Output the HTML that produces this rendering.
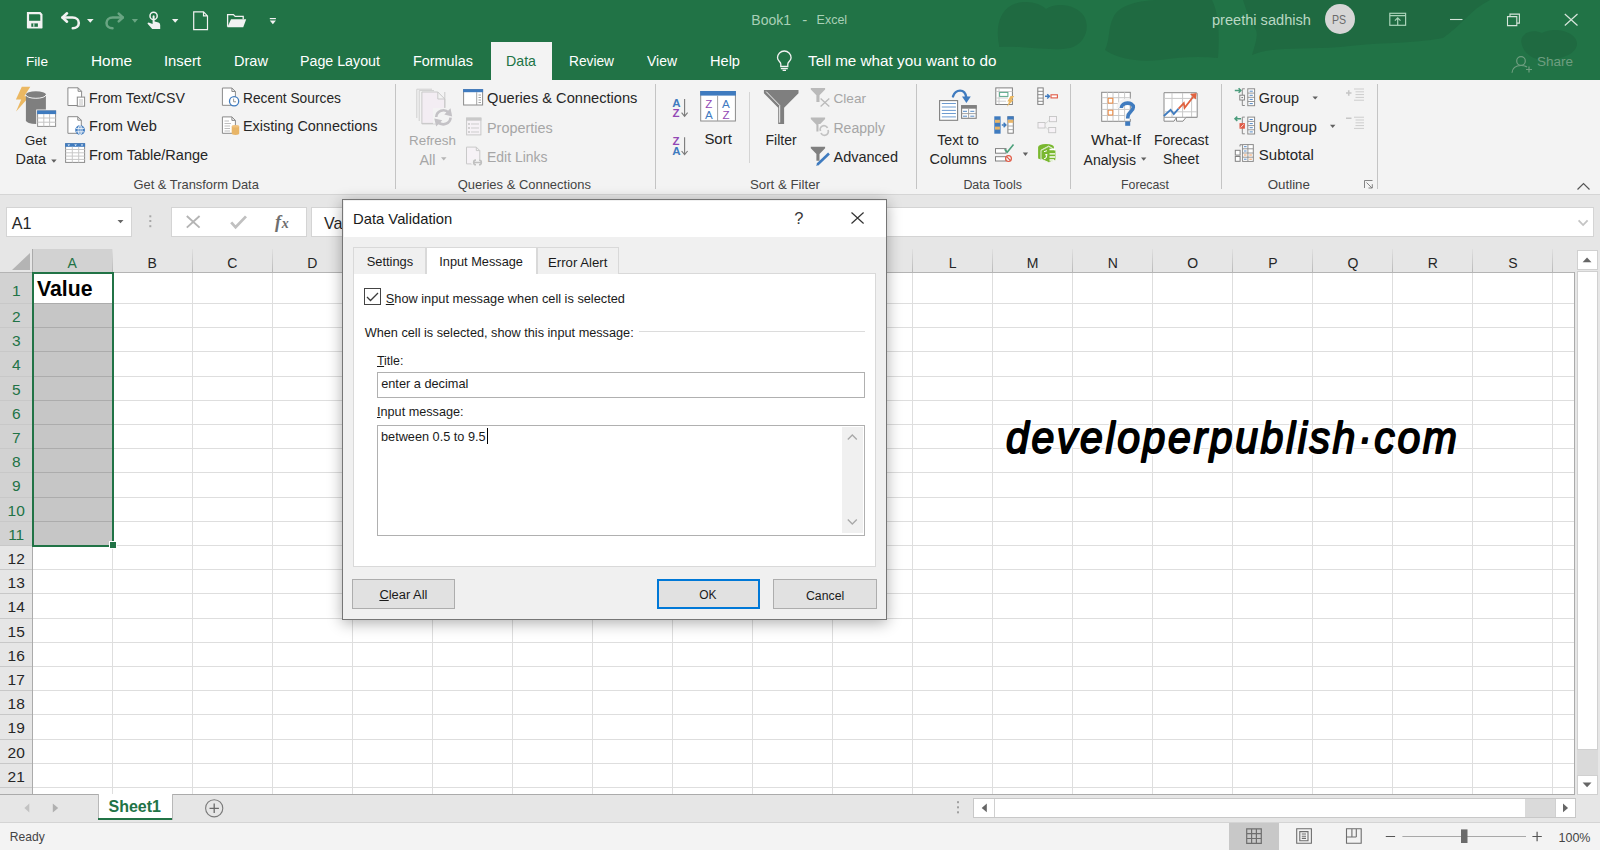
<!DOCTYPE html><html><head><meta charset="utf-8"><style>
html,body{margin:0;padding:0;width:1600px;height:850px;overflow:hidden;background:#ffffff;}
body{position:relative;font-family:"Liberation Sans",sans-serif;}
.t{position:absolute;white-space:nowrap;line-height:1;}
.r{position:absolute;box-sizing:border-box;}
svg.r{overflow:visible;}
</style></head><body>
<div class="r" style="left:0.00px;top:0.00px;width:1600.00px;height:80.00px;background:#217346"></div>
<svg class="r" style="left:0.00px;top:0.00px" width="1600" height="80" viewBox="0 0 1600 80">
<g fill="#1f6a41">
<path d="M999 45 C996 30 998 12 1012 5 C1025 -1 1040 3 1046 9 C1056 2 1078 4 1085 18 C1090 30 1084 44 1070 48 C1050 52 1020 45 999 47 Z"/>
<path d="M1105 50 C1110 40 1108 28 1113 18 C1118 5 1140 0 1160 0 L1212 0 C1218 12 1220 30 1218 58 C1200 56 1180 57 1160 60 C1140 62 1120 60 1105 50 Z"/>
<path d="M1243 0 L1490 0 C1470 10 1462 25 1443 38 C1410 44 1380 42 1340 47 C1300 50 1275 46 1252 55 C1256 42 1258 35 1256 30 C1250 20 1246 10 1243 0 Z"/>
<path d="M1522 45 C1518 35 1530 28 1542 33 C1555 26 1578 32 1577 45 C1575 55 1560 60 1540 60 C1530 58 1524 52 1522 45 Z"/>
</g></svg>
<svg class="r" style="left:0.00px;top:0.00px" width="300" height="40" viewBox="0 0 300 40">
<g fill="none" stroke="#f2f2f2" stroke-width="2.2">
<path d="M28 13.2 H40 L41.4 14.6 V27.2 H28 Z"/>
</g>
<rect x="27.5" y="20.8" width="14.5" height="7.5" fill="#f2f2f2"/>
<rect x="31.3" y="23.4" width="6.6" height="3.4" fill="#217346"/>
<rect x="33.3" y="23.4" width="1.1" height="3.4" fill="#f2f2f2"/>
<g fill="none" stroke="#f2f2f2" stroke-width="2.6" stroke-linecap="round" stroke-linejoin="round">
<path d="M62.5 17.5 H72.5 C76.5 17.5 78.8 20 78.8 23 C78.8 26.2 76.2 28.2 72.8 28.2"/>
<path d="M67 13.3 L62.5 17.5 L67 21.7"/>
</g>
<path d="M87 19 H93.6 L90.3 22.8Z" fill="#f2f2f2"/>
<g fill="none" stroke="#6aa583" stroke-width="2.5" stroke-linecap="round" stroke-linejoin="round">
<path d="M122.8 17.5 H112.8 C108.8 17.5 106.5 20 106.5 23 C106.5 26.2 109.1 28.2 112.5 28.2"/>
<path d="M118.7 13.6 L122.8 17.5 L118.7 21.4"/>
</g>
<path d="M131.8 19 H138 L134.9 22.8Z" fill="#6aa583"/>
<circle cx="153.6" cy="15.9" r="3.6" fill="none" stroke="#f2f2f2" stroke-width="1.5"/>
<path d="M152.6 16 Q153.6 14.6 154.6 16 V21.5 L158.5 22.5 Q160.3 23.2 160.2 25 V29 H152.2 L147.6 23.8 Q147.2 22.6 148.6 22.4 L152.6 24 Z" fill="#f2f2f2"/>
<path d="M172 19 H178.4 L175.2 22.8Z" fill="#f2f2f2"/>
<path d="M193.7 11.9 H203.5 L207.5 15.9 V29.6 H193.7 Z M203.5 11.9 V15.9 H207.5" fill="none" stroke="#f2f2f2" stroke-width="1.2"/>
<path d="M227.6 26.8 V14.6 H233.4 L235.2 16.4 H243.2 V19.3" fill="none" stroke="#f2f2f2" stroke-width="1.3"/>
<path d="M231 19.3 H246.2 L243.2 27.3 H227.4 Z" fill="#f2f2f2"/>
<rect x="269.8" y="18" width="6.1" height="1.2" fill="#f2f2f2"/>
<path d="M269.8 20.6 H275.9 L272.85 24.2Z" fill="#f2f2f2"/>
</svg>
<div class="t" style="left:26.00px;top:54.64px;font-size:13.653px;color:#ffffff;">File</div>
<div class="t" style="left:91.00px;top:53.19px;font-size:15.370px;color:#ffffff;">Home</div>
<div class="t" style="left:164.00px;top:53.67px;font-size:14.794px;color:#ffffff;">Insert</div>
<div class="t" style="left:234.00px;top:53.86px;font-size:14.570px;color:#ffffff;">Draw</div>
<div class="t" style="left:300.00px;top:54.14px;font-size:14.246px;color:#ffffff;">Page Layout</div>
<div class="t" style="left:413.00px;top:54.01px;font-size:14.397px;color:#ffffff;">Formulas</div>
<div class="t" style="left:569.00px;top:54.58px;font-size:13.724px;color:#ffffff;">Review</div>
<div class="t" style="left:647.00px;top:55.38px;font-size:13.957px;color:#ffffff;">View</div>
<div class="t" style="left:710.00px;top:53.85px;font-size:14.587px;color:#ffffff;">Help</div>
<div class="r" style="left:491.00px;top:42.40px;width:61.00px;height:37.60px;background:#f3f3f3"></div>
<div class="t" style="left:506.00px;top:54.17px;font-size:14.202px;color:#217346;">Data</div>
<div class="t" style="left:808.00px;top:53.27px;font-size:15.276px;color:#ffffff;">Tell me what you want to do</div>
<div class="t" style="left:751.30px;top:13.05px;font-size:14.001px;color:#a8d0b6;">Book1</div>
<div class="t" style="left:802.20px;top:12.19px;font-size:15.014px;color:#a8d0b6;">-</div>
<div class="t" style="left:816.60px;top:14.34px;font-size:12.473px;color:#a8d0b6;">Excel</div>
<div class="t" style="left:1212.00px;top:12.84px;font-size:14.597px;color:#b9d8c3;">preethi sadhish</div>
<div class="r" style="left:1325px;top:4px;width:30px;height:30px;border-radius:50%;background:#d6d6d6"></div>
<div class="t" style="left:1331.60px;top:13.63px;font-size:12.600px;color:#6a6a6a;transform:scaleX(0.84);transform-origin:0 0;">PS</div>
<div class="t" style="left:1537.00px;top:54.78px;font-size:13.491px;color:#6f9e80;">Share</div>
<div class="r" style="left:0.00px;top:80.00px;width:1600.00px;height:114.00px;background:#f3f3f3"></div>
<div class="r" style="left:0.00px;top:193.50px;width:1600.00px;height:1.00px;background:#d5d5d5"></div>
<div class="r" style="left:395.00px;top:84.00px;width:1.00px;height:105.00px;background:#c4c4c4"></div>
<div class="r" style="left:655.00px;top:84.00px;width:1.00px;height:105.00px;background:#c4c4c4"></div>
<div class="r" style="left:915.50px;top:84.00px;width:1.00px;height:105.00px;background:#c4c4c4"></div>
<div class="r" style="left:1070.00px;top:84.00px;width:1.00px;height:105.00px;background:#c4c4c4"></div>
<div class="r" style="left:1221.00px;top:84.00px;width:1.00px;height:105.00px;background:#c4c4c4"></div>
<div class="r" style="left:1377.00px;top:84.00px;width:1.00px;height:105.00px;background:#c4c4c4"></div>
<div class="r" style="left:749.00px;top:92.00px;width:1.00px;height:71.00px;background:#d4d4d4"></div>
<div class="t" style="left:133.50px;top:178.57px;font-size:12.904px;color:#444444;">Get &amp; Transform Data</div>
<div class="t" style="left:457.70px;top:178.52px;font-size:12.963px;color:#444444;">Queries &amp; Connections</div>
<div class="t" style="left:750.00px;top:178.27px;font-size:13.260px;color:#444444;">Sort &amp; Filter</div>
<div class="t" style="left:963.40px;top:178.96px;font-size:12.451px;color:#444444;">Data Tools</div>
<div class="t" style="left:1121.00px;top:179.05px;font-size:12.339px;color:#444444;">Forecast</div>
<div class="t" style="left:1267.70px;top:178.20px;font-size:13.350px;color:#444444;">Outline</div>
<div class="t" style="left:24.70px;top:133.50px;font-size:13.587px;color:#262626;">Get</div>
<div class="t" style="left:15.50px;top:152.47px;font-size:14.439px;color:#262626;">Data</div>
<div class="t" style="left:89.00px;top:91.28px;font-size:14.200px;color:#262626;">From Text/CSV</div>
<div class="t" style="left:89.00px;top:119.15px;font-size:14.584px;color:#262626;">From Web</div>
<div class="t" style="left:89.00px;top:147.69px;font-size:14.534px;color:#262626;">From Table/Range</div>
<div class="t" style="left:243.00px;top:91.64px;font-size:13.774px;color:#262626;">Recent Sources</div>
<div class="t" style="left:243.00px;top:119.29px;font-size:14.424px;color:#262626;">Existing Connections</div>
<div class="t" style="left:409.00px;top:133.63px;font-size:13.423px;color:#a6a6a6;">Refresh</div>
<div class="t" style="left:419.50px;top:152.51px;font-size:14.397px;color:#a6a6a6;">All</div>
<div class="t" style="left:487.00px;top:91.21px;font-size:14.635px;color:#262626;">Queries &amp; Connections</div>
<div class="t" style="left:487.00px;top:120.59px;font-size:14.415px;color:#a6a6a6;">Properties</div>
<div class="t" style="left:487.00px;top:150.37px;font-size:13.978px;color:#a6a6a6;">Edit Links</div>
<div class="t" style="left:704.40px;top:132.35px;font-size:14.940px;color:#262626;">Sort</div>
<div class="t" style="left:765.50px;top:133.11px;font-size:14.040px;color:#262626;">Filter</div>
<div class="t" style="left:833.50px;top:92.08px;font-size:13.600px;color:#a6a6a6;">Clear</div>
<div class="t" style="left:833.50px;top:120.72px;font-size:14.037px;color:#a6a6a6;">Reapply</div>
<div class="t" style="left:833.50px;top:149.52px;font-size:14.502px;color:#262626;">Advanced</div>
<div class="t" style="left:937.30px;top:133.01px;font-size:14.156px;color:#262626;">Text to</div>
<div class="t" style="left:929.50px;top:152.43px;font-size:14.496px;color:#262626;">Columns</div>
<div class="t" style="left:1091.00px;top:131.92px;font-size:15.453px;color:#262626;">What-If</div>
<div class="t" style="left:1083.60px;top:152.79px;font-size:14.072px;color:#262626;">Analysis</div>
<div class="t" style="left:1154.00px;top:133.12px;font-size:14.035px;color:#262626;">Forecast</div>
<div class="t" style="left:1163.00px;top:153.04px;font-size:13.776px;color:#262626;">Sheet</div>
<div class="t" style="left:1258.80px;top:91.05px;font-size:14.464px;color:#262626;">Group</div>
<div class="t" style="left:1258.80px;top:118.65px;font-size:15.172px;color:#262626;">Ungroup</div>
<div class="t" style="left:1258.80px;top:147.26px;font-size:15.043px;color:#262626;">Subtotal</div>
<div class="r" style="left:0.00px;top:194.50px;width:1600.00px;height:54.50px;background:#e6e6e6"></div>
<div class="r" style="left:6.30px;top:207.00px;width:126.00px;height:29.60px;background:#fff;border:1px solid #d4d4d4"></div>
<div class="t" style="left:11.70px;top:214.59px;font-size:16.188px;color:#262626;">A1</div>
<div class="r" style="left:170.60px;top:207.00px;width:136.00px;height:29.60px;background:#fff;border:1px solid #d4d4d4"></div>
<svg class="r" style="left:0.00px;top:200.00px" width="400" height="50" viewBox="0 200 400 50"><path d="M117.5 220 H123.5 L120.5 223.2Z" fill="#666"/><rect x="149.3" y="215.3" width="2" height="2" fill="#a8a8a8"/><rect x="149.3" y="220" width="2" height="2" fill="#a8a8a8"/><rect x="149.3" y="225.2" width="2" height="2" fill="#a8a8a8"/><path d="M186.8 216 L199.6 227.6 M199.6 216 L186.8 227.6" stroke="#b4b4b4" stroke-width="1.9"/><path d="M231.2 222.3 L235.6 227.3 L246 216.4" fill="none" stroke="#c0c0c0" stroke-width="2.8"/><text x="275" y="227.5" font-family="Liberation Serif" font-style="italic" font-weight="bold" font-size="18" fill="#6e6e6e">f</text><text x="281.8" y="227.8" font-family="Liberation Serif" font-style="italic" font-weight="bold" font-size="14" fill="#6e6e6e">x</text></svg>
<div class="r" style="left:310.60px;top:207.00px;width:1283.10px;height:29.60px;background:#fff;border:1px solid #d4d4d4"></div>
<svg class="r" style="left:1570.00px;top:210.00px" width="30" height="20" viewBox="1570 210 30 20"><path d="M1578.6 220.3 L1583.1 225 L1587.6 220.3" fill="none" stroke="#c4c4c4" stroke-width="1.8"/></svg>
<div class="t" style="left:324.00px;top:214.66px;font-size:16.107px;color:#262626;">Value</div>
<div class="r" style="left:0.00px;top:249.00px;width:1575.00px;height:23.20px;background:#e6e6e6"></div>
<div class="r" style="left:0.00px;top:272.20px;width:32.50px;height:522.20px;background:#e6e6e6"></div>
<div class="r" style="left:32.50px;top:272.20px;width:1542.00px;height:522.20px;background:#ffffff"></div>
<div class="r" style="left:0.00px;top:272.20px;width:32.50px;height:272.80px;background:#d2d2d2"></div>
<div class="r" style="left:32.20px;top:249.00px;width:81.00px;height:23.20px;background:#d2d2d2"></div>
<div class="r" style="left:32.50px;top:303.00px;width:1542.00px;height:1.00px;background:#dedede"></div>
<div class="r" style="left:32.50px;top:327.00px;width:1542.00px;height:1.00px;background:#dedede"></div>
<div class="r" style="left:32.50px;top:351.00px;width:1542.00px;height:1.00px;background:#dedede"></div>
<div class="r" style="left:32.50px;top:376.00px;width:1542.00px;height:1.00px;background:#dedede"></div>
<div class="r" style="left:32.50px;top:400.00px;width:1542.00px;height:1.00px;background:#dedede"></div>
<div class="r" style="left:32.50px;top:424.00px;width:1542.00px;height:1.00px;background:#dedede"></div>
<div class="r" style="left:32.50px;top:448.00px;width:1542.00px;height:1.00px;background:#dedede"></div>
<div class="r" style="left:32.50px;top:472.00px;width:1542.00px;height:1.00px;background:#dedede"></div>
<div class="r" style="left:32.50px;top:497.00px;width:1542.00px;height:1.00px;background:#dedede"></div>
<div class="r" style="left:32.50px;top:521.00px;width:1542.00px;height:1.00px;background:#dedede"></div>
<div class="r" style="left:32.50px;top:545.00px;width:1542.00px;height:1.00px;background:#dedede"></div>
<div class="r" style="left:32.50px;top:569.00px;width:1542.00px;height:1.00px;background:#dedede"></div>
<div class="r" style="left:32.50px;top:593.00px;width:1542.00px;height:1.00px;background:#dedede"></div>
<div class="r" style="left:32.50px;top:618.00px;width:1542.00px;height:1.00px;background:#dedede"></div>
<div class="r" style="left:32.50px;top:642.00px;width:1542.00px;height:1.00px;background:#dedede"></div>
<div class="r" style="left:32.50px;top:666.00px;width:1542.00px;height:1.00px;background:#dedede"></div>
<div class="r" style="left:32.50px;top:690.00px;width:1542.00px;height:1.00px;background:#dedede"></div>
<div class="r" style="left:32.50px;top:714.00px;width:1542.00px;height:1.00px;background:#dedede"></div>
<div class="r" style="left:32.50px;top:739.00px;width:1542.00px;height:1.00px;background:#dedede"></div>
<div class="r" style="left:32.50px;top:763.00px;width:1542.00px;height:1.00px;background:#dedede"></div>
<div class="r" style="left:32.50px;top:787.00px;width:1542.00px;height:1.00px;background:#dedede"></div>
<div class="r" style="left:112.00px;top:272.20px;width:1.00px;height:522.20px;background:#dedede"></div>
<div class="r" style="left:112.00px;top:249.00px;width:1.00px;height:23.00px;background:linear-gradient(#e0e0e0,#b9b9b9)"></div>
<div class="r" style="left:192.00px;top:272.20px;width:1.00px;height:522.20px;background:#dedede"></div>
<div class="r" style="left:192.00px;top:249.00px;width:1.00px;height:23.00px;background:linear-gradient(#e0e0e0,#b9b9b9)"></div>
<div class="r" style="left:272.00px;top:272.20px;width:1.00px;height:522.20px;background:#dedede"></div>
<div class="r" style="left:272.00px;top:249.00px;width:1.00px;height:23.00px;background:linear-gradient(#e0e0e0,#b9b9b9)"></div>
<div class="r" style="left:352.00px;top:272.20px;width:1.00px;height:522.20px;background:#dedede"></div>
<div class="r" style="left:352.00px;top:249.00px;width:1.00px;height:23.00px;background:linear-gradient(#e0e0e0,#b9b9b9)"></div>
<div class="r" style="left:432.00px;top:272.20px;width:1.00px;height:522.20px;background:#dedede"></div>
<div class="r" style="left:432.00px;top:249.00px;width:1.00px;height:23.00px;background:linear-gradient(#e0e0e0,#b9b9b9)"></div>
<div class="r" style="left:512.00px;top:272.20px;width:1.00px;height:522.20px;background:#dedede"></div>
<div class="r" style="left:512.00px;top:249.00px;width:1.00px;height:23.00px;background:linear-gradient(#e0e0e0,#b9b9b9)"></div>
<div class="r" style="left:592.00px;top:272.20px;width:1.00px;height:522.20px;background:#dedede"></div>
<div class="r" style="left:592.00px;top:249.00px;width:1.00px;height:23.00px;background:linear-gradient(#e0e0e0,#b9b9b9)"></div>
<div class="r" style="left:672.00px;top:272.20px;width:1.00px;height:522.20px;background:#dedede"></div>
<div class="r" style="left:672.00px;top:249.00px;width:1.00px;height:23.00px;background:linear-gradient(#e0e0e0,#b9b9b9)"></div>
<div class="r" style="left:752.00px;top:272.20px;width:1.00px;height:522.20px;background:#dedede"></div>
<div class="r" style="left:752.00px;top:249.00px;width:1.00px;height:23.00px;background:linear-gradient(#e0e0e0,#b9b9b9)"></div>
<div class="r" style="left:832.00px;top:272.20px;width:1.00px;height:522.20px;background:#dedede"></div>
<div class="r" style="left:832.00px;top:249.00px;width:1.00px;height:23.00px;background:linear-gradient(#e0e0e0,#b9b9b9)"></div>
<div class="r" style="left:912.00px;top:272.20px;width:1.00px;height:522.20px;background:#dedede"></div>
<div class="r" style="left:912.00px;top:249.00px;width:1.00px;height:23.00px;background:linear-gradient(#e0e0e0,#b9b9b9)"></div>
<div class="r" style="left:992.00px;top:272.20px;width:1.00px;height:522.20px;background:#dedede"></div>
<div class="r" style="left:992.00px;top:249.00px;width:1.00px;height:23.00px;background:linear-gradient(#e0e0e0,#b9b9b9)"></div>
<div class="r" style="left:1072.00px;top:272.20px;width:1.00px;height:522.20px;background:#dedede"></div>
<div class="r" style="left:1072.00px;top:249.00px;width:1.00px;height:23.00px;background:linear-gradient(#e0e0e0,#b9b9b9)"></div>
<div class="r" style="left:1152.00px;top:272.20px;width:1.00px;height:522.20px;background:#dedede"></div>
<div class="r" style="left:1152.00px;top:249.00px;width:1.00px;height:23.00px;background:linear-gradient(#e0e0e0,#b9b9b9)"></div>
<div class="r" style="left:1232.00px;top:272.20px;width:1.00px;height:522.20px;background:#dedede"></div>
<div class="r" style="left:1232.00px;top:249.00px;width:1.00px;height:23.00px;background:linear-gradient(#e0e0e0,#b9b9b9)"></div>
<div class="r" style="left:1312.00px;top:272.20px;width:1.00px;height:522.20px;background:#dedede"></div>
<div class="r" style="left:1312.00px;top:249.00px;width:1.00px;height:23.00px;background:linear-gradient(#e0e0e0,#b9b9b9)"></div>
<div class="r" style="left:1392.00px;top:272.20px;width:1.00px;height:522.20px;background:#dedede"></div>
<div class="r" style="left:1392.00px;top:249.00px;width:1.00px;height:23.00px;background:linear-gradient(#e0e0e0,#b9b9b9)"></div>
<div class="r" style="left:1472.00px;top:272.20px;width:1.00px;height:522.20px;background:#dedede"></div>
<div class="r" style="left:1472.00px;top:249.00px;width:1.00px;height:23.00px;background:linear-gradient(#e0e0e0,#b9b9b9)"></div>
<div class="r" style="left:1552.00px;top:272.20px;width:1.00px;height:522.20px;background:#dedede"></div>
<div class="r" style="left:1552.00px;top:249.00px;width:1.00px;height:23.00px;background:linear-gradient(#e0e0e0,#b9b9b9)"></div>
<div class="r" style="left:0.00px;top:303.00px;width:32.00px;height:1.00px;background:#c8c8c8"></div>
<div class="r" style="left:0.00px;top:327.00px;width:32.00px;height:1.00px;background:#c8c8c8"></div>
<div class="r" style="left:0.00px;top:351.00px;width:32.00px;height:1.00px;background:#c8c8c8"></div>
<div class="r" style="left:0.00px;top:376.00px;width:32.00px;height:1.00px;background:#c8c8c8"></div>
<div class="r" style="left:0.00px;top:400.00px;width:32.00px;height:1.00px;background:#c8c8c8"></div>
<div class="r" style="left:0.00px;top:424.00px;width:32.00px;height:1.00px;background:#c8c8c8"></div>
<div class="r" style="left:0.00px;top:448.00px;width:32.00px;height:1.00px;background:#c8c8c8"></div>
<div class="r" style="left:0.00px;top:472.00px;width:32.00px;height:1.00px;background:#c8c8c8"></div>
<div class="r" style="left:0.00px;top:497.00px;width:32.00px;height:1.00px;background:#c8c8c8"></div>
<div class="r" style="left:0.00px;top:521.00px;width:32.00px;height:1.00px;background:#c8c8c8"></div>
<div class="r" style="left:0.00px;top:545.00px;width:32.00px;height:1.00px;background:#c8c8c8"></div>
<div class="r" style="left:0.00px;top:569.00px;width:32.00px;height:1.00px;background:#c8c8c8"></div>
<div class="r" style="left:0.00px;top:593.00px;width:32.00px;height:1.00px;background:#c8c8c8"></div>
<div class="r" style="left:0.00px;top:618.00px;width:32.00px;height:1.00px;background:#c8c8c8"></div>
<div class="r" style="left:0.00px;top:642.00px;width:32.00px;height:1.00px;background:#c8c8c8"></div>
<div class="r" style="left:0.00px;top:666.00px;width:32.00px;height:1.00px;background:#c8c8c8"></div>
<div class="r" style="left:0.00px;top:690.00px;width:32.00px;height:1.00px;background:#c8c8c8"></div>
<div class="r" style="left:0.00px;top:714.00px;width:32.00px;height:1.00px;background:#c8c8c8"></div>
<div class="r" style="left:0.00px;top:739.00px;width:32.00px;height:1.00px;background:#c8c8c8"></div>
<div class="r" style="left:0.00px;top:763.00px;width:32.00px;height:1.00px;background:#c8c8c8"></div>
<div class="r" style="left:0.00px;top:787.00px;width:32.00px;height:1.00px;background:#c8c8c8"></div>
<div class="r" style="left:0.00px;top:272.00px;width:1574.50px;height:1.00px;background:#b4b4b4"></div>
<div class="r" style="left:32.00px;top:249.00px;width:1.00px;height:545.40px;background:#ababab"></div>
<div class="r" style="left:1574.00px;top:272.00px;width:1.00px;height:522.40px;background:#ababab"></div>
<div class="r" style="left:0.00px;top:794.00px;width:1575.00px;height:1.00px;background:#ababab"></div>
<svg class="r" style="left:12.40px;top:253.00px" width="18" height="17" viewBox="0 0 18 17"><path d="M18 0 L18 17 L0 17Z" fill="#b4b4b4"/></svg>
<div class="t" style="left:67.53px;top:255.85px;font-size:14.000px;color:#217346;">A</div>
<div class="t" style="left:147.57px;top:255.85px;font-size:14.000px;color:#262626;">B</div>
<div class="t" style="left:227.22px;top:255.85px;font-size:14.000px;color:#262626;">C</div>
<div class="t" style="left:307.26px;top:255.85px;font-size:14.000px;color:#262626;">D</div>
<div class="t" style="left:387.69px;top:255.85px;font-size:14.000px;color:#262626;">E</div>
<div class="t" style="left:468.12px;top:255.85px;font-size:14.000px;color:#262626;">F</div>
<div class="t" style="left:547.00px;top:255.85px;font-size:14.000px;color:#262626;">G</div>
<div class="t" style="left:627.42px;top:255.85px;font-size:14.000px;color:#262626;">H</div>
<div class="t" style="left:710.58px;top:255.85px;font-size:14.000px;color:#262626;">I</div>
<div class="t" style="left:789.06px;top:255.85px;font-size:14.000px;color:#262626;">J</div>
<div class="t" style="left:867.93px;top:255.85px;font-size:14.000px;color:#262626;">K</div>
<div class="t" style="left:948.75px;top:255.85px;font-size:14.000px;color:#262626;">L</div>
<div class="t" style="left:1026.85px;top:255.85px;font-size:14.000px;color:#262626;">M</div>
<div class="t" style="left:1107.66px;top:255.85px;font-size:14.000px;color:#262626;">N</div>
<div class="t" style="left:1187.32px;top:255.85px;font-size:14.000px;color:#262626;">O</div>
<div class="t" style="left:1268.13px;top:255.85px;font-size:14.000px;color:#262626;">P</div>
<div class="t" style="left:1347.40px;top:255.85px;font-size:14.000px;color:#262626;">Q</div>
<div class="t" style="left:1427.82px;top:255.85px;font-size:14.000px;color:#262626;">R</div>
<div class="t" style="left:1508.25px;top:255.85px;font-size:14.000px;color:#262626;">S</div>
<div class="t" style="left:11.89px;top:282.88px;font-size:15.500px;color:#217346;">1</div>
<div class="t" style="left:11.89px;top:309.08px;font-size:15.500px;color:#217346;">2</div>
<div class="t" style="left:11.89px;top:333.28px;font-size:15.500px;color:#217346;">3</div>
<div class="t" style="left:11.89px;top:357.48px;font-size:15.500px;color:#217346;">4</div>
<div class="t" style="left:11.89px;top:381.68px;font-size:15.500px;color:#217346;">5</div>
<div class="t" style="left:11.89px;top:405.88px;font-size:15.500px;color:#217346;">6</div>
<div class="t" style="left:11.89px;top:430.08px;font-size:15.500px;color:#217346;">7</div>
<div class="t" style="left:11.89px;top:454.28px;font-size:15.500px;color:#217346;">8</div>
<div class="t" style="left:11.89px;top:478.48px;font-size:15.500px;color:#217346;">9</div>
<div class="t" style="left:7.58px;top:502.68px;font-size:15.500px;color:#217346;">10</div>
<div class="t" style="left:8.15px;top:526.88px;font-size:15.500px;color:#217346;">11</div>
<div class="t" style="left:7.58px;top:551.08px;font-size:15.500px;color:#262626;">12</div>
<div class="t" style="left:7.58px;top:575.28px;font-size:15.500px;color:#262626;">13</div>
<div class="t" style="left:7.58px;top:599.48px;font-size:15.500px;color:#262626;">14</div>
<div class="t" style="left:7.58px;top:623.68px;font-size:15.500px;color:#262626;">15</div>
<div class="t" style="left:7.58px;top:647.88px;font-size:15.500px;color:#262626;">16</div>
<div class="t" style="left:7.58px;top:672.08px;font-size:15.500px;color:#262626;">17</div>
<div class="t" style="left:7.58px;top:696.28px;font-size:15.500px;color:#262626;">18</div>
<div class="t" style="left:7.58px;top:720.48px;font-size:15.500px;color:#262626;">19</div>
<div class="t" style="left:7.58px;top:744.68px;font-size:15.500px;color:#262626;">20</div>
<div class="t" style="left:7.58px;top:768.88px;font-size:15.500px;color:#262626;">21</div>
<div class="r" style="left:33.00px;top:303.00px;width:79.50px;height:242.50px;background:rgba(0,0,0,0.222)"></div>
<div class="r" style="left:32.00px;top:272.00px;width:82.00px;height:275.00px;border:2px solid #217346"></div>
<div class="r" style="left:109.00px;top:541.00px;width:7.50px;height:7.50px;background:#fff"></div>
<div class="r" style="left:110.00px;top:542.00px;width:5.50px;height:5.50px;background:#217346"></div>
<div class="t" style="left:37.00px;top:279.31px;font-size:21.241px;color:#000;font-weight:bold;">Value</div>
<div class="r" style="left:1575.00px;top:249.00px;width:25.00px;height:546.00px;background:#e6e6e6"></div>
<div class="r" style="left:1577.00px;top:250.20px;width:20.60px;height:20.30px;background:#fff;border:1px solid #d0d0d0"></div>
<div class="r" style="left:1577.00px;top:270.50px;width:20.60px;height:479.90px;background:#fff;border:1px solid #d0d0d0"></div>
<div class="r" style="left:1577.00px;top:750.40px;width:20.60px;height:24.90px;background:#dadada"></div>
<div class="r" style="left:1577.00px;top:775.30px;width:20.60px;height:19.70px;background:#fff;border:1px solid #d0d0d0"></div>
<div class="r" style="left:0.00px;top:795.00px;width:1600.00px;height:27.50px;background:#e6e6e6"></div>
<div class="r" style="left:0.00px;top:822.00px;width:1600.00px;height:1.00px;background:#d4d4d4"></div>
<div class="r" style="left:97.80px;top:794.00px;width:74.90px;height:26.00px;background:#fff;border-left:1px solid #b8b8b8;border-right:1px solid #b8b8b8"></div>
<div class="r" style="left:98.30px;top:817.70px;width:73.90px;height:2.10px;background:#217346"></div>
<div class="t" style="left:108.50px;top:798.74px;font-size:16.009px;color:#217346;font-weight:bold;">Sheet1</div>
<div class="r" style="left:973.40px;top:798.00px;width:602.20px;height:20.00px;background:#fff;border:1px solid #c8c8c8"></div>
<div class="r" style="left:1524.70px;top:799.00px;width:30.70px;height:18.00px;background:#dadada"></div>
<div class="r" style="left:994.00px;top:799.00px;width:1.00px;height:18.00px;background:#d0d0d0"></div>
<div class="r" style="left:1555.00px;top:799.00px;width:1.00px;height:18.00px;background:#d0d0d0"></div>
<div class="r" style="left:0.00px;top:823.00px;width:1600.00px;height:27.00px;background:#f3f3f3"></div>
<div class="r" style="left:1229.00px;top:822.80px;width:50.00px;height:27.20px;background:#c8c8c8"></div>
<div class="t" style="left:9.75px;top:831.05px;font-size:12.108px;color:#444;">Ready</div>
<svg class="r" style="left:0.00px;top:240.00px" width="1600" height="610" viewBox="0 240 1600 610">
<path d="M1582.6 262.3 H1591.5 L1587.05 257.5Z" fill="#666"/>
<path d="M1582.6 782.5 H1591.5 L1587.05 787.3Z" fill="#666"/>
<path d="M986.8 803.5 V812.3 L981.7 807.9Z" fill="#666"/>
<path d="M1563 803.5 V812.3 L1568.1 807.9Z" fill="#666"/>
<path d="M29.3 803.5 V812.5 L24.4 808Z" fill="#c2c2c2"/>
<path d="M52.8 803.5 V812.5 L58.2 808Z" fill="#b0b0b0"/>
<circle cx="214.2" cy="808.3" r="8.6" fill="none" stroke="#7a7a7a" stroke-width="1.1"/>
<path d="M209.5 808.3 H218.9 M214.2 803.6 V813" stroke="#6a6a6a" stroke-width="1.3"/>
<rect x="957" y="801.2" width="2" height="2" fill="#a0a0a0"/><rect x="957" y="806.3" width="2" height="2" fill="#a0a0a0"/><rect x="957" y="811.3" width="2" height="2" fill="#a0a0a0"/>
<path d="M1246.7 828.8 H1261.3 V843.3 H1246.7 Z M1251.6 828.8 V843.3 M1256.4 828.8 V843.3 M1246.7 833.6 H1261.3 M1246.7 838.5 H1261.3" fill="none" stroke="#6e6e6e" stroke-width="1.2"/>
<path d="M1296.7 828.8 H1311.4 V843.3 H1296.7 Z M1299.8 831.6 H1308 V840.7 H1299.8 Z M1301.8 834 H1306 M1301.8 836.2 H1306 M1301.8 838.4 H1306" fill="none" stroke="#6e6e6e" stroke-width="1.1"/>
<path d="M1346.5 828.8 H1361.2 V843.3 H1346.5 Z M1351.9 828.8 V837 M1356.3 828.8 V837 M1346.5 837 H1356.3" fill="none" stroke="#6e6e6e" stroke-width="1.1"/>
<path d="M1385.8 836.5 H1395.1 M1532.4 836.5 H1541.8 M1537.1 831.8 V841.2" stroke="#555" stroke-width="1.2"/>
<path d="M1402.4 836.5 H1526" stroke="#a8a8a8" stroke-width="1"/>
<rect x="1461" y="829.4" width="6.5" height="13.6" fill="#6a6a6a"/>
</svg>
<div class="t" style="left:1558.50px;top:831.61px;font-size:12.512px;color:#444;">100%</div>
<div class="r" style="left:342px;top:199px;width:545px;height:420.5px;background:#f0f0f0;border:1px solid #767676;box-shadow:0 3px 14px rgba(0,0,0,0.32)"></div>
<div class="r" style="left:343.50px;top:200.50px;width:542.00px;height:36.50px;background:#fff"></div>
<div class="t" style="left:353.00px;top:212.47px;font-size:14.803px;color:#1a1a1a;">Data Validation</div>
<div class="t" style="left:794.30px;top:209.63px;font-size:16.500px;color:#3a3a3a;">?</div>
<svg class="r" style="left:850.60px;top:212.00px" width="13.1" height="12" viewBox="0 0 13.1 12"><path d="M0.5 0.5 L12.6 11.5 M12.6 0.5 L0.5 11.5" stroke="#333" stroke-width="1.2" fill="none"/></svg>
<div class="r" style="left:352.50px;top:273.30px;width:523.50px;height:293.90px;background:#fff;border:1px solid #d9d9d9"></div>
<div class="r" style="left:353.00px;top:247.00px;width:73.00px;height:27.00px;background:#f0f0f0;border:1px solid #d9d9d9;border-bottom:none"></div>
<div class="r" style="left:537.00px;top:247.30px;width:81.60px;height:26.70px;background:#f0f0f0;border:1px solid #d9d9d9;border-bottom:none"></div>
<div class="r" style="left:425.60px;top:246.60px;width:111.60px;height:27.70px;background:#fff;border:1px solid #d9d9d9;border-bottom:none"></div>
<div class="t" style="left:366.70px;top:256.08px;font-size:12.897px;color:#1a1a1a;">Settings</div>
<div class="t" style="left:439.30px;top:255.90px;font-size:12.760px;color:#1a1a1a;">Input Message</div>
<div class="t" style="left:548.00px;top:255.83px;font-size:13.197px;color:#1a1a1a;">Error Alert</div>
<div class="r" style="left:364.00px;top:288.20px;width:16.80px;height:16.40px;background:#fff;border:1px solid #444"></div>
<svg class="r" style="left:360.00px;top:285.00px" width="25" height="25" viewBox="360 285 25 25"><path d="M367 297 L370.5 300.5 L378 293" fill="none" stroke="#3a3a3a" stroke-width="1.3"/></svg>
<div class="t" style="left:385.80px;top:292.88px;font-size:12.780px;color:#1a1a1a;"><u>S</u>how input message when cell is selected</div>
<div class="t" style="left:364.70px;top:327.43px;font-size:12.717px;color:#1a1a1a;">When cell is selected, show this input message:</div>
<div class="r" style="left:639.00px;top:331.20px;width:226.00px;height:1.00px;background:#dcdcdc"></div>
<div class="t" style="left:377.00px;top:354.51px;font-size:12.395px;color:#1a1a1a;"><u>T</u>itle:</div>
<div class="r" style="left:377.00px;top:372.00px;width:487.60px;height:26.00px;background:#fff;border:1px solid #b0b0b0"></div>
<div class="t" style="left:381.20px;top:377.60px;font-size:12.754px;color:#1a1a1a;">enter a decimal</div>
<div class="t" style="left:377.00px;top:406.48px;font-size:12.666px;color:#1a1a1a;"><u>I</u>nput message:</div>
<div class="r" style="left:377.00px;top:424.50px;width:487.60px;height:111.00px;background:#fff;border:1px solid #b0b0b0"></div>
<div class="t" style="left:381.00px;top:431.22px;font-size:12.736px;color:#1a1a1a;">between 0.5 to 9.5</div>
<div class="r" style="left:487.00px;top:428.00px;width:1.00px;height:16.00px;background:#000"></div>
<div class="r" style="left:842.00px;top:427.00px;width:20.50px;height:106.00px;background:#f0f0f0"></div>
<svg class="r" style="left:840.00px;top:420.00px" width="30" height="120" viewBox="840 420 30 120"><path d="M847.8 439.5 L852.3 435 L856.8 439.5 M847.8 519.5 L852.3 524 L856.8 519.5" fill="none" stroke="#a8a8a8" stroke-width="1.3"/></svg>
<div class="r" style="left:352.00px;top:579.00px;width:102.80px;height:30.00px;background:#e1e1e1;border:1px solid #adadad"></div>
<div class="t" style="left:379.40px;top:589.46px;font-size:12.917px;color:#1a1a1a;"><u>C</u>lear All</div>
<div class="r" style="left:656.80px;top:579.40px;width:103.10px;height:29.30px;background:#e1e1e1;border:2px solid #0078d7"></div>
<div class="t" style="left:699.30px;top:590.26px;font-size:11.974px;color:#1a1a1a;">OK</div>
<div class="r" style="left:773.00px;top:579.40px;width:103.80px;height:29.30px;background:#e1e1e1;border:1px solid #adadad"></div>
<div class="t" style="left:806.00px;top:590.01px;font-size:12.272px;color:#1a1a1a;">Cancel</div>
<svg class="r" style="left:0;top:0" width="1600" height="850"><g transform="translate(0 453) scale(1 1.1) translate(0 -453)"><text x="1006" y="453" font-family="Liberation Sans" font-style="italic" font-size="41" textLength="451" lengthAdjust="spacing" fill="#fff" stroke="#fff" stroke-width="4.5" stroke-linejoin="round">developerpublish&#183;com</text><text x="1006" y="453" font-family="Liberation Sans" font-style="italic" font-size="41" textLength="451" lengthAdjust="spacing" fill="#000" stroke="#000" stroke-width="1.7" stroke-linejoin="round">developerpublish&#183;com</text></g></svg>
<svg class="r" style="left:0.00px;top:0.00px" width="1600" height="200" viewBox="0 0 1600 200"><path d="M21.8 86.7 H30.3 L24.3 96.2 H29.6 L16.1 111.6 L21.2 99.6 H15.9 Z" fill="#ebb862"/><path d="M25.9 94.6 V120.5 A10 3.4 0 0 0 45.9 120.5 V94.6 Z" fill="#7f7f7f"/><ellipse cx="35.9" cy="94.6" rx="10" ry="3.4" fill="#7f7f7f"/><path d="M25.9 94.9 A10 3.4 0 0 0 45.9 94.9" fill="none" stroke="#f3f3f3" stroke-width="1"/><rect x="36.2" y="109.5" width="20.7" height="18.2" fill="#f3f3f3"/><rect x="37.6" y="110.9" width="18" height="15.5" fill="#fff" stroke="#909090" stroke-width="1"/><rect x="37.1" y="110.5" width="19" height="3.6" fill="#3f7bbf"/><path d="M43.8 114 V126.4 M49.6 114 V126.4 M37.6 118 H55.6 M37.6 122.2 H55.6" stroke="#c4c4c4" stroke-width="1"/><path d="M67.9 87.8 H78.1 L81.6 91.3 V105.5 H67.9 Z M78.1 87.8 V91.3 H81.6" fill="#ffffff" stroke="#8a8a8a" stroke-width="1" stroke-linejoin="round"/><rect x="77.3" y="97.1" width="7.3" height="9.1" fill="#fff" stroke="#8a8a8a" stroke-width="1"/><path d="M79 100 H83 M79 102 H83 M79 104 H83" stroke="#b0b0b0" stroke-width="0.8"/><path d="M67.9 116.7 H77.8 L81.3 120.2 V133.3 H67.9 Z M77.8 116.7 V120.2 H81.3" fill="#ffffff" stroke="#8a8a8a" stroke-width="1" stroke-linejoin="round"/><circle cx="80.1" cy="130.1" r="4.9" fill="#3f7bbf"/><path d="M76 128.4 H84.2 M76 131.8 H84.2 M80.1 125.3 V134.9" stroke="#fff" stroke-width="0.8"/><ellipse cx="80.1" cy="130.1" rx="2" ry="4.6" fill="none" stroke="#fff" stroke-width="0.8"/><rect x="65.6" y="143.7" width="19" height="18.7" fill="#fff" stroke="#8a8a8a" stroke-width="1"/><rect x="65.1" y="143.2" width="20" height="3.6" fill="#3f7bbf"/><path d="M72.3 146.8 V162.4 M78.7 146.8 V162.4 M65.6 149.5 H84.6 M65.6 152.8 H84.6 M65.6 156.1 H84.6 M65.6 159.4 H84.6" stroke="#c8c8c8" stroke-width="1"/><path d="M67.5 144.4 h2.6 l-1.3 1.5z M74.3 144.4 h2.6 l-1.3 1.5z M80.7 144.4 h2.6 l-1.3 1.5z" fill="#fff"/><path d="M222.4 88.0 H231.9 L235.4 91.5 V105.3 H222.4 Z M231.9 88.0 V91.5 H235.4" fill="#ffffff" stroke="#8a8a8a" stroke-width="1" stroke-linejoin="round"/><circle cx="234.1" cy="101.3" r="4.6" fill="#fff" stroke="#3f7bbf" stroke-width="1.3"/><path d="M233.6 98.6 V101.8 H236" fill="none" stroke="#8a8a8a" stroke-width="0.9"/><path d="M222.4 116.9 H231.9 L235.4 120.4 V133.3 H222.4 Z M231.9 116.9 V120.4 H235.4" fill="#ffffff" stroke="#8a8a8a" stroke-width="1" stroke-linejoin="round"/><path d="M224.5 121 H229 M224.5 123.5 H231 M224.5 126 H230 M224.5 128.5 H230 M224.5 131 H230" stroke="#b8b8b8" stroke-width="0.9"/><path d="M231.7 126.2 V133.6 A3.75 1.3 0 0 0 239.2 133.6 V126.2 Z" fill="#e8b567"/><ellipse cx="235.45" cy="126.2" rx="3.75" ry="1.3" fill="#f0c27e"/><path d="M416.8 89.2 H432 M416.8 89.2 V118 M419.2 90.6 H434 M419.2 90.6 V121" fill="none" stroke="#cfcfcf" stroke-width="1"/><path d="M421.9 92.0 H437.8 L444.8 99.0 V123.9 H421.9 Z M437.8 92.0 V99.0 H444.8" fill="#f3edf3" stroke="#c9c9c9" stroke-width="1" stroke-linejoin="round"/><path d="M433 108 H446 V123.5 H433 Z" fill="#f3f3f3"/><path d="M444.8 92 V107.7" stroke="#c9c9c9" stroke-width="1"/><path d="M421.9 123.4 H433" stroke="#c9c9c9" stroke-width="1"/><path d="M436.2 117 A7.2 7.2 0 0 1 448.6 112.6" fill="none" stroke="#c4c2c6" stroke-width="2.6"/><path d="M444.3 114.6 L452.2 116.4 L450.5 108.2 Z" fill="#c4c2c6"/><path d="M450.6 117.6 A7.2 7.2 0 0 1 438.2 122" fill="none" stroke="#c4c2c6" stroke-width="2.6"/><path d="M442.3 120.2 L434.3 118.4 L436.2 126.5 Z" fill="#c4c2c6"/><path d="M441 157.3 H446.5 L443.75 160.5Z" fill="#b5b5b5"/><rect x="463.6" y="89.6" width="19" height="15.4" fill="#fff" stroke="#8a8a8a" stroke-width="1"/><rect x="463.1" y="89.1" width="20" height="3.1" fill="#3f7bbf"/><path d="M476.7 92.2 V105 M478.5 95 H481 M478.5 97.5 H481 M478.5 100 H481 M478.5 102.5 H481" stroke="#9a9a9a" stroke-width="0.9"/><rect x="466.6" y="118.1" width="14.3" height="16.8" fill="#f6f2f6" stroke="#c9c9c9" stroke-width="1"/><rect x="466.1" y="117.6" width="15.3" height="3.1" fill="#c9c9c9"/><path d="M471 124 H479 M471 128 H479 M471 132 H479" stroke="#cdcdcd" stroke-width="1"/><circle cx="469" cy="124" r="0.9" fill="#c0c0c0"/><circle cx="469" cy="128" r="0.9" fill="#c0c0c0"/><circle cx="469" cy="132" r="0.9" fill="#c0c0c0"/><path d="M466.5 147.1 H476.3 L479.8 150.6 V163.9 H466.5 Z M476.3 147.1 V150.6 H479.8" fill="#f6f2f6" stroke="#c9c9c9" stroke-width="1" stroke-linejoin="round"/><rect x="471" y="159" width="13" height="6" rx="3" fill="#f3f3f3"/><path d="M474 162.5 h7 M476 160 a2.3 2.3 0 0 0 0 4.8 M479 160 a2.3 2.3 0 0 1 0 4.8" fill="none" stroke="#c0c0c0" stroke-width="1.5"/><text x="672.2" y="107.4" font-family="Liberation Sans" font-weight="bold" font-size="11.5" fill="#3f7bbf">A</text><text x="672.6" y="116.6" font-family="Liberation Sans" font-weight="bold" font-size="11.5" fill="#9248b5">Z</text><text x="672.6" y="145.0" font-family="Liberation Sans" font-weight="bold" font-size="11.5" fill="#9248b5">Z</text><text x="672.2" y="154.9" font-family="Liberation Sans" font-weight="bold" font-size="11.5" fill="#3f7bbf">A</text><path d="M684.6 99 V116 M681.6 112.6 L684.6 116.3 L687.6 112.6 M684.6 137.3 V154.4 M681.6 151 L684.6 154.7 L687.6 151" fill="none" stroke="#7a7a7a" stroke-width="1.1"/><rect x="700.7" y="91.5" width="34.7" height="29.5" fill="#fff" stroke="#8a8a8a" stroke-width="1"/><rect x="700.2" y="91" width="35.7" height="4.6" fill="#3f7bbf"/><path d="M717.6 95.6 V121" stroke="#a0a0a0" stroke-width="1"/><text x="705.3" y="107.8" font-family="Liberation Sans" font-size="11.6" fill="#9248b5">Z</text><text x="705.0" y="118.5" font-family="Liberation Sans" font-size="11.6" fill="#3f7bbf">A</text><text x="722.0" y="107.8" font-family="Liberation Sans" font-size="11.6" fill="#3f7bbf">A</text><text x="722.4" y="118.5" font-family="Liberation Sans" font-size="11.6" fill="#9248b5">Z</text><path d="M763.9 90.1 H798.5 V93.2 L784.1 107.7 V124 H778.2 V107.7 L763.9 93.2 Z" fill="#7f7f7f"/><path d="M766.2 91.6 L779.7 105.4 V122.6" fill="none" stroke="#fff" stroke-width="0.9"/><path d="M810.8 88.1 h14.3 v1.5 l-5.6 5.7 v6.8 h-3.1 v-6.8 l-5.6 -5.7 Z" fill="#bababa"/><path d="M820.6 98.6 L829.3 106.5 M829.3 98.6 L820.6 106.5" stroke="#bababa" stroke-width="1.3"/><path d="M810.8 117.6 h14.3 v1.5 l-5.6 5.7 v6.8 h-3.1 v-6.8 l-5.6 -5.7 Z" fill="#bababa"/><rect x="818.5" y="124" width="12" height="12" fill="#f3f3f3"/><path d="M820.5 131 A3.8 3.8 0 0 1 827.5 128 M828 130 A3.8 3.8 0 0 1 821 133" fill="none" stroke="#c2c2c2" stroke-width="1.8"/><path d="M810.8 146.7 h14.3 v1.5 l-5.6 5.7 v6.8 h-3.1 v-6.8 l-5.6 -5.7 Z" fill="#7f7f7f"/><path d="M817.5 164.5 L829 153.5" stroke="#3f7bbf" stroke-width="2.6"/><path d="M816.2 166 L817.2 162.8 L819.2 164.8Z" fill="#3f7bbf"/><rect x="939.6" y="100.6" width="18" height="19.7" fill="#fff" stroke="#808080" stroke-width="1.1"/><path d="M941.8 103.5 H955.9 M941.8 107 H955.9 M941.8 110.4 H955.9 M941.8 113.5 H955.9 M941.8 116.9 H955.9" stroke="#6d9bd0" stroke-width="1"/><path d="M953 96.4 C955.5 89 965 88 966.3 97.5" fill="none" stroke="#3f7bbf" stroke-width="2.4" stroke-linecap="round"/><path d="M962 96.5 L970.8 96.5 L966.4 103 Z" fill="#3f7bbf"/><rect x="961.6" y="105.7" width="14.6" height="12.6" fill="#fff" stroke="#808080" stroke-width="1.1"/><rect x="961.1" y="105.2" width="15.6" height="3.5" fill="#808080"/><path d="M968.6 108.7 V118.3 M961.6 113.6 H976.2" stroke="#9a9a9a" stroke-width="0.9"/><path d="M963 111.3 h4 M970.3 111.3 h4 M963 116.2 h4 M970.3 116.2 h4" stroke="#3f7bbf" stroke-width="0.9"/><rect x="995.8" y="87.9" width="16.6" height="16.6" fill="#fff" stroke="#808080" stroke-width="1"/><path d="M999 88 V104.5 M995.8 91.5 H1012.4 M995.8 98 H1008 M995.8 101.2 H1006" stroke="#c8c8c8" stroke-width="0.9"/><rect x="999.6" y="92.4" width="8.3" height="4" fill="#fff" stroke="#5aa88a" stroke-width="1"/><path d="M1010.5 96 H1014.2 L1011.5 100 H1013.5 L1007 106.8 L1009 101.5 H1007.3 Z" fill="#ebb862"/><rect x="994.3" y="116.3" width="6.3" height="17.4" fill="#3f7bbf"/><rect x="995" y="119.8" width="4.9" height="3" fill="#e8b567"/><rect x="995" y="126.6" width="4.9" height="3" fill="#e8b567"/><path d="M1001.8 125 H1005.5 M1003.6 122.8 L1005.9 125 L1003.6 127.2" fill="none" stroke="#3f7bbf" stroke-width="1.4"/><rect x="1007.9" y="116.8" width="5.4" height="16.4" fill="#fff" stroke="#808080" stroke-width="1"/><rect x="1007.4" y="116.3" width="6.3" height="3.4" fill="#3f7bbf"/><rect x="1008" y="119.8" width="5.2" height="3" fill="#e8b567"/><path d="M1007.9 126 h5.4 M1007.9 129.6 h5.4" stroke="#9a9a9a" stroke-width="0.8"/><rect x="995.5" y="148.6" width="10.5" height="4.6" fill="#fff" stroke="#808080" stroke-width="1"/><rect x="995.5" y="156.7" width="10.5" height="4.3" fill="#fff" stroke="#808080" stroke-width="1"/><path d="M1004.6 149.3 L1007.2 152.2 L1013.5 144.6" fill="none" stroke="#4aa07a" stroke-width="1.6"/><circle cx="1008.5" cy="158.6" r="2.9" fill="#f3f3f3" stroke="#e05a45" stroke-width="1.2"/><path d="M1006.6 156.7 L1010.4 160.5" stroke="#e05a45" stroke-width="1.1"/><path d="M1022.8 152.5 H1028.1 L1025.45 155.9Z" fill="#606060"/><rect x="1037.8" y="87.9" width="5.4" height="16.5" fill="#fff" stroke="#808080" stroke-width="1"/><path d="M1037.8 91.3 h5.4 M1037.8 94.7 h5.4 M1037.8 98.1 h5.4 M1037.8 101.3 h5.4" stroke="#808080" stroke-width="0.9"/><path d="M1045 96.3 H1049.3 M1047.2 94.2 L1049.5 96.3 L1047.2 98.4" fill="none" stroke="#3f7bbf" stroke-width="1.4"/><rect x="1051" y="94.8" width="6.4" height="3.1" fill="#fff" stroke="#e05a45" stroke-width="1.1"/><rect x="1038" y="122.5" width="7" height="5.5" fill="#f6f2f6" stroke="#c5c5c5" stroke-width="0.9"/><rect x="1049.5" y="116.5" width="7" height="5.2" fill="#f6f2f6" stroke="#c5c5c5" stroke-width="0.9"/><rect x="1048.7" y="127.5" width="7" height="5.2" fill="#f6f2f6" stroke="#c5c5c5" stroke-width="0.9"/><path d="M1045 124 L1049.5 120 M1045 126.5 L1048.7 130" stroke="#cfcfcf" stroke-width="0.8"/><path d="M1038.1 147.5 Q1038.1 144 1046 144 Q1054 144 1054 147.5 V157 L1041 159.6 L1038.1 158.6 Z" fill="#79b82f"/><path d="M1041 150.2 L1048.7 146.1 L1055.9 150.4 V159.9 L1048.7 162.5 L1041 159.1 Z" fill="#79b82f" stroke="#f3f3f3" stroke-width="0.9" stroke-linejoin="round"/><path d="M1041.4 150.3 L1048.7 146.6 L1055.6 150.5" fill="none" stroke="#d8ecc2" stroke-width="0.8"/><path d="M1049.5 149.5 h5.5 M1049.5 153.8 h5.5 M1049.5 157 h5.5 M1049.5 160 h4.5" stroke="#fff" stroke-width="1.3"/><path d="M1044 151.7 L1047 150.7 M1045 155 L1047 154.3 L1046 158 L1044 158.8" fill="none" stroke="#fff" stroke-width="1"/><rect x="1101.7" y="92.3" width="28.6" height="29" fill="#fff" stroke="#888" stroke-width="1"/><path d="M1107.4 92.3 V121.3 M1113 92.3 V121.3 M1118.7 92.3 V121.3 M1124.6 92.3 V121.3 M1101.7 97.7 H1130.3 M1101.7 103.5 H1130.3 M1101.7 109.4 H1130.3 M1101.7 115.5 H1130.3" stroke="#c9c9c9" stroke-width="1"/><rect x="1108.2" y="98.3" width="4.6" height="4.8" fill="none" stroke="#ee8c44" stroke-width="1"/><rect x="1108.2" y="110.2" width="4.6" height="4.8" fill="none" stroke="#ee8c44" stroke-width="1"/><path d="M1119.5 108 C1119.5 99.5 1135 99 1135 107.2 C1135 112 1128.2 112.5 1127.8 117.5 V119" fill="none" stroke="#f3f3f3" stroke-width="6.2"/><path d="M1121.3 108 C1121.3 101.8 1133.3 101.4 1133.3 107.2 C1133.3 111.3 1127.8 112 1127.8 117.2 V118.6" fill="none" stroke="#3f7bbf" stroke-width="3.6"/><rect x="1125.2" y="121.5" width="5" height="4.3" fill="#3f7bbf"/><path d="M1164 92.7 H1196.2 Q1197.2 92.7 1197.2 93.7 V117.4 H1186 L1183 121.2 H1176.5 V117.4 L1174 121.2 H1164 Z" fill="#fff" stroke="#8a8a8a" stroke-width="1"/><path d="M1172 93 V117 M1182.6 93 V117 M1191.6 93 V117 M1164 98.4 H1197 M1164 111.8 H1197" stroke="#c9c9c9" stroke-width="1"/><path d="M1164 117.3 H1197" stroke="#9a9a9a" stroke-width="1"/><path d="M1163.8 116 L1170.6 109.8 L1173.8 114.1 L1178.6 108.6" fill="none" stroke="#3f7bbf" stroke-width="1.8"/><path d="M1178.6 108.6 L1183.8 103.2 L1184.6 107.8 L1194.6 95" fill="none" stroke="#e0623f" stroke-width="1.8"/><path d="M1190 94 L1196.6 93 L1195.8 99.6 Z" fill="#e0623f"/><path d="M1234.8 90.5 H1240.6 M1238.6 88.3 L1240.9 90.5 L1238.6 92.7" fill="none" stroke="#4b9c7c" stroke-width="1.5"/><path d="M1244.8 88.8 H1242.3 V105.5 H1244.8" fill="none" stroke="#8a8a8a" stroke-width="1"/><rect x="1239.8" y="95.2" width="4.6" height="4.8" fill="#fff" stroke="#808080" stroke-width="1"/><rect x="1241.5" y="96.9" width="1.3" height="1.3" fill="#606060"/><rect x="1247.8" y="88.8" width="6.8" height="16.9" fill="#fff" stroke="#8a8a8a" stroke-width="1"/><path d="M1247.8 93.1 h6.8 M1247.8 97.3 h6.8 M1247.8 101.5 h6.8" stroke="#8a8a8a" stroke-width="0.9"/><path d="M1249.6 91.2 h3.2 M1249.6 95.3 h3.2 M1249.6 99.4 h3.2 M1249.6 103.6 h3.2" stroke="#3f7bbf" stroke-width="0.9"/><path d="M1241.1 118.8 H1235.3 M1237.3 116.6 L1235 118.8 L1237.3 121.0" fill="none" stroke="#4b9c7c" stroke-width="1.5"/><path d="M1244.8 117.1 H1242.3 V133.8 H1244.8" fill="none" stroke="#8a8a8a" stroke-width="1"/><rect x="1239.5" y="123.1" width="5.4" height="5.6" fill="#e05a45"/><path d="M1240.8 127.4 L1243.6 124.4" stroke="#fff" stroke-width="0.8"/><rect x="1247.8" y="117.1" width="6.8" height="16.9" fill="#fff" stroke="#8a8a8a" stroke-width="1"/><path d="M1247.8 121.4 h6.8 M1247.8 125.6 h6.8 M1247.8 129.8 h6.8" stroke="#8a8a8a" stroke-width="0.9"/><path d="M1249.6 119.5 h3.2 M1249.6 123.6 h3.2 M1249.6 127.7 h3.2 M1249.6 131.9 h3.2" stroke="#3f7bbf" stroke-width="0.9"/><path d="M1240 146.5 V144.7 H1242.5" fill="none" stroke="#8a8a8a" stroke-width="1"/><rect x="1235.3" y="150.3" width="4.8" height="4.8" fill="#fff" stroke="#808080" stroke-width="1"/><rect x="1235.3" y="156.5" width="4.8" height="4.8" fill="#fff" stroke="#808080" stroke-width="1"/><rect x="1242.6" y="144.6" width="10.7" height="16.8" fill="#fff" stroke="#8a8a8a" stroke-width="1"/><path d="M1247.9 144.6 V161.4 M1242.6 148.8 h10.7 M1242.6 153 h10.7 M1242.6 157.2 h10.7" stroke="#8a8a8a" stroke-width="0.9"/><path d="M1244 146.7 h2.6 M1244 151 h2.6 M1244 159.2 h2.6" stroke="#3f7bbf" stroke-width="0.9"/><path d="M1244 155 h2.6 M1249.3 155 h2.6 M1249.3 159.2 h2.6" stroke="#ee8c44" stroke-width="0.9"/><path d="M1346 93 h5.5 M1348.75 90.2 v5.6 M1346 118.2 h5.5" stroke="#c6c6c6" stroke-width="1.6"/><path d="M1354 89 h10 M1355.5 91.8 h8.5 M1355.5 94.6 h8.5 M1355.5 97.4 h8.5 M1354 100.2 h10 M1354 117.2 h10 M1355.5 120 h8.5 M1355.5 122.8 h8.5 M1355.5 125.6 h8.5 M1354 128.4 h10" stroke="#cdcdcd" stroke-width="1"/><path d="M1364.5 188 V180.5 H1372.5 M1366.5 182.5 L1372 188 M1368.5 188 H1372.3 V184.2" fill="none" stroke="#777" stroke-width="0.9"/><path d="M1577.5 189.5 L1583.5 183.5 L1589.5 189.5" fill="none" stroke="#555" stroke-width="1.2"/><path d="M51.2 159.6 h5.4 l-2.7 3.2z" fill="#606060"/><path d="M1141.0 157.5 h5.4 l-2.7 3.2z" fill="#606060"/><path d="M1312.5 96.4 h5.4 l-2.7 3.2z" fill="#606060"/><path d="M1330.0 124.7 h5.4 l-2.7 3.2z" fill="#606060"/><path d="M780.8 66.5 V64 C780.8 62 777.5 60.8 777.5 57.8 A6.8 6.8 0 0 1 791.1 57.8 C791.1 60.8 787.8 62 787.8 64 V66.5 Z M780.8 68.6 H787.8 M782.6 70.4 H786" fill="none" stroke="#f2f2f2" stroke-width="1.3"/><circle cx="1521" cy="61" r="4.3" fill="none" stroke="#6f9e80" stroke-width="1.2"/><path d="M1512 72.8 C1512.5 67.5 1516 65.5 1521 65.5 C1523.5 65.5 1525.5 66 1527 67" fill="none" stroke="#6f9e80" stroke-width="1.2"/><path d="M1526 69.5 h6 M1529 66.5 v6" stroke="#6f9e80" stroke-width="1.2"/><rect x="1389.8" y="13.3" width="15.8" height="12" fill="none" stroke="#a9d3b8" stroke-width="1.2"/><path d="M1389.8 15.6 h15.8 M1397.7 25 V17.6 M1394.9 20.6 L1397.7 17.8 L1400.5 20.6" fill="none" stroke="#a9d3b8" stroke-width="1.2"/><path d="M1450 19.5 H1462.5" stroke="#d6e4da" stroke-width="1.1"/><path d="M1507.5 16.6 h9.3 v9 h-9.3z M1510 16.6 v-2.5 h9.4 v9 h-2.6" fill="none" stroke="#d6e4da" stroke-width="1.1"/><path d="M1564.8 14 L1577.5 25.5 M1577.5 14 L1564.8 25.5" stroke="#d6e4da" stroke-width="1.2"/></svg>
</body></html>
